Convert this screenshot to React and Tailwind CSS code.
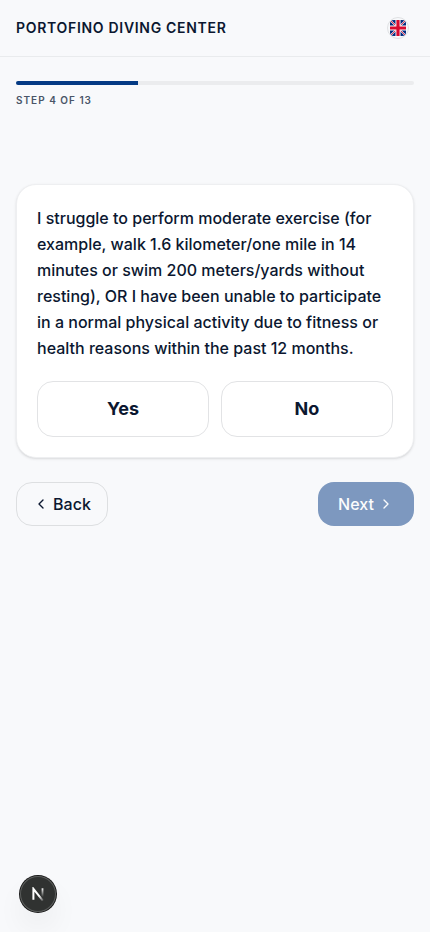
import React from "react";
import { ChevronLeft, ChevronRight } from "lucide-react";

function UkFlag() {
  return (
    <svg className="size-4 rounded-[4px]" viewBox="0 0 60 60">
      <rect width="60" height="60" fill="#012b7f" />
      <path d="M0 0L60 60M60 0L0 60" stroke="#fff" strokeWidth="6" />
      <path d="M0 0L60 60M60 0L0 60" stroke="#d80027" strokeWidth="3" />
      <path d="M30 0V60M0 30H60" stroke="#fff" strokeWidth="19" />
      <path d="M30 0V60M0 30H60" stroke="#d80a30" strokeWidth="12" />
    </svg>
  );
}

function DevBadge() {
  return (
    <div className="fixed bottom-5 left-5 flex size-9 items-center justify-center rounded-full bg-[#303231] shadow-[0_0_0_1px_#171717,inset_0_0_0_1px_#5b5d5c,0_16px_32px_-8px_rgba(0,0,0,0.16)]">
      <svg width="14" height="14" viewBox="0 0 14 14" fill="none">
        <defs>
          <linearGradient id="stem" x1="0" y1="1" x2="0" y2="10" gradientUnits="userSpaceOnUse">
            <stop stopColor="#fff" />
            <stop offset="1" stopColor="#fff" stopOpacity="0" />
          </linearGradient>
          <linearGradient id="slash" x1="8" y1="9" x2="12" y2="13.5" gradientUnits="userSpaceOnUse">
            <stop stopColor="#fff" />
            <stop offset="1" stopColor="#fff" stopOpacity="0.2" />
          </linearGradient>
        </defs>
        <path d="M11.5 1.3V10.5" stroke="url(#stem)" strokeWidth="1.8" />
        <path d="M2.4 12.8V1.8L11.8 13.6" stroke="url(#slash)" strokeWidth="2" />
      </svg>
    </div>
  );
}

export default function App() {
  return (
    <div className="min-h-screen bg-[#f8f9fb] font-['Inter',sans-serif] text-[#0b1730] antialiased">
      <header className="flex h-[57px] items-center justify-between border-b border-[#e9ebed] px-4">
        <h1 className="text-sm font-semibold tracking-[0.7px]">PORTOFINO DIVING CENTER</h1>
        <button className="mr-[5px] flex size-[22px] items-center justify-center rounded-full border border-[#dfe1e3]" aria-label="English">
          <UkFlag />
        </button>
      </header>
      <main className="px-4 pt-6">
        <div className="h-1 overflow-hidden rounded-full bg-[#ebecee]">
          <div className="h-full w-[30.77%] bg-[#043a84]" />
        </div>
        <p className="mt-2 text-[10px] leading-[15px] font-semibold tracking-[1px] text-[#4a5568]">STEP 4 OF 13</p>
        <section className="mt-[76px] rounded-[20px] border border-[#eeeff1] bg-white p-5 shadow-[0_1px_3px_rgba(0,0,0,0.1),0_1px_2px_-1px_rgba(0,0,0,0.1)]">
          <p className="text-base leading-[26px] font-medium">
            I struggle to perform moderate exercise (for example, walk 1.6 kilometer/one mile in 14 minutes or swim 200 meters/yards without resting), OR I have been unable to participate in a normal physical activity due to fitness or health reasons within the past 12 months.
          </p>
          <div className="mt-5 grid grid-cols-2 gap-3">
            <button className="h-14 rounded-2xl border border-[#e2e3e5] text-lg font-bold">Yes</button>
            <button className="h-14 rounded-2xl border border-[#e2e3e5] text-lg font-bold">No</button>
          </div>
        </section>
        <nav className="mt-6 flex items-center justify-between">
          <button className="flex h-11 w-[92px] items-center justify-center gap-1 rounded-2xl border border-[#dddfe1] text-base font-medium">
            <ChevronLeft size={16} />
            Back
          </button>
          <button className="flex h-11 w-24 items-center justify-center gap-1 rounded-2xl bg-[#043a84] text-base font-medium text-white opacity-50">
            Next
            <ChevronRight size={16} />
          </button>
        </nav>
      </main>
      <DevBadge />
    </div>
  );
}
